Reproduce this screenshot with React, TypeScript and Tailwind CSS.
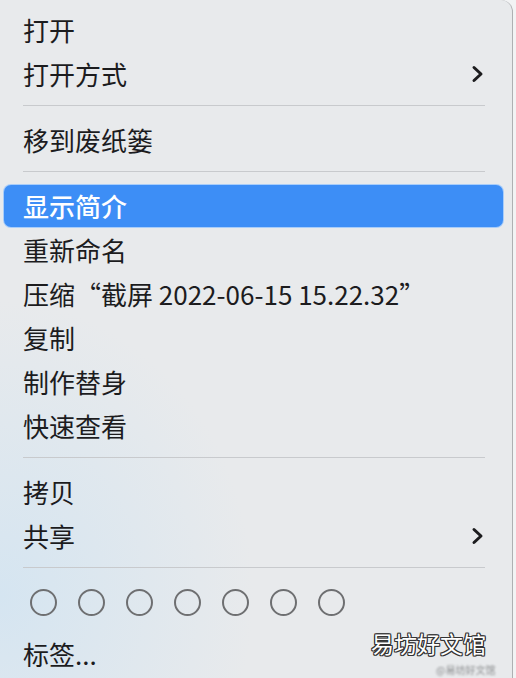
import React from 'react';

type Item = { label: string; sub?: boolean; active?: boolean };

// Menu groups, separated by thin rules
const groups: Item[][] = [
  [{ label: '打开' }, { label: '打开方式', sub: true }],
  [{ label: '移到废纸篓' }],
  [
    { label: '显示简介', active: true },
    { label: '重新命名' },
    { label: '压缩“截屏 2022-06-15 15.22.32”' },
    { label: '复制' },
    { label: '制作替身' },
    { label: '快速查看' },
  ],
  [{ label: '拷贝' }, { label: '共享', sub: true }],
];

function Chevron() {
  return (
    <svg width="13" height="18" viewBox="0 0 13 18" fill="none">
      <path d="M3 2.5 L10 9 L3 15.5" stroke="#1c1c1e" strokeWidth="3" strokeLinecap="round" strokeLinejoin="round" />
    </svg>
  );
}

function Row({ item }: { item: Item }) {
  if (item.active) {
    return (
      <div className="h-[44px] py-[1px] pl-[4px] pr-[9px]">
        <div className="h-full flex items-center pl-[19px] rounded-[7px] bg-[#3d8ef6] ring-1 ring-[#a8cdfa] text-white font-medium">
          <span className="leading-none">{item.label}</span>
        </div>
      </div>
    );
  }
  return (
    <div className="h-[44px] flex items-center justify-between pl-[23px] pr-[28px]">
      <span className="leading-none whitespace-nowrap">{item.label}</span>
      {item.sub && <Chevron />}
    </div>
  );
}

function Separator() {
  return <div className="mt-[9px] mb-[12px] ml-[23px] mr-[27px] h-px bg-[#c8cacd]" />;
}

export default function App() {
  return (
    <div className="relative w-[516px] h-[678px] overflow-hidden bg-[#f2f3f4]">
      <div className="h-full w-[513px] pt-[8px] rounded-tr-[12px] border-r border-[#aeb0b2] bg-[#e8eaec] bg-[radial-gradient(ellipse_at_0%_88%,#d5e5f1_0%,rgba(232,234,236,0)_35%)] text-[26px] text-[#1c1c1e] font-['Noto_Sans_CJK_SC','Noto_Sans',sans-serif]">
        {groups.map((g, gi) => (
          <div key={gi}>
            {g.map((it) => (
              <Row key={it.label} item={it} />
            ))}
            <Separator />
          </div>
        ))}

        {/* tag colour dots */}
        <div className="h-[52px] pt-[9px] pl-[30px] flex gap-[21px]">
          {Array.from({ length: 7 }).map((_, i) => (
            <span key={i} className="w-[27px] h-[27px] rounded-full border-2 border-[#6e6f71]" />
          ))}
        </div>

        <Row item={{ label: '标签...' }} />
      </div>

      {/* watermark */}
      <div className="absolute left-[371px] top-[632px] text-[23px] leading-none text-white font-['Noto_Sans_CJK_SC',sans-serif] [text-shadow:1px_0_0_#333,-1px_0_0_#333,0_1px_0_#333,0_-1px_0_#333,1px_1px_0_#333,-1px_-1px_0_#333,1px_-1px_0_#333,-1px_1px_0_#333]">
        易坊好文馆
      </div>
      <div className="absolute left-[436px] top-[665px] text-[10px] leading-none text-[#8a8c8e] blur-[1px] font-['Noto_Sans_CJK_SC',sans-serif]">
        @易坊好文馆
      </div>
    </div>
  );
}
